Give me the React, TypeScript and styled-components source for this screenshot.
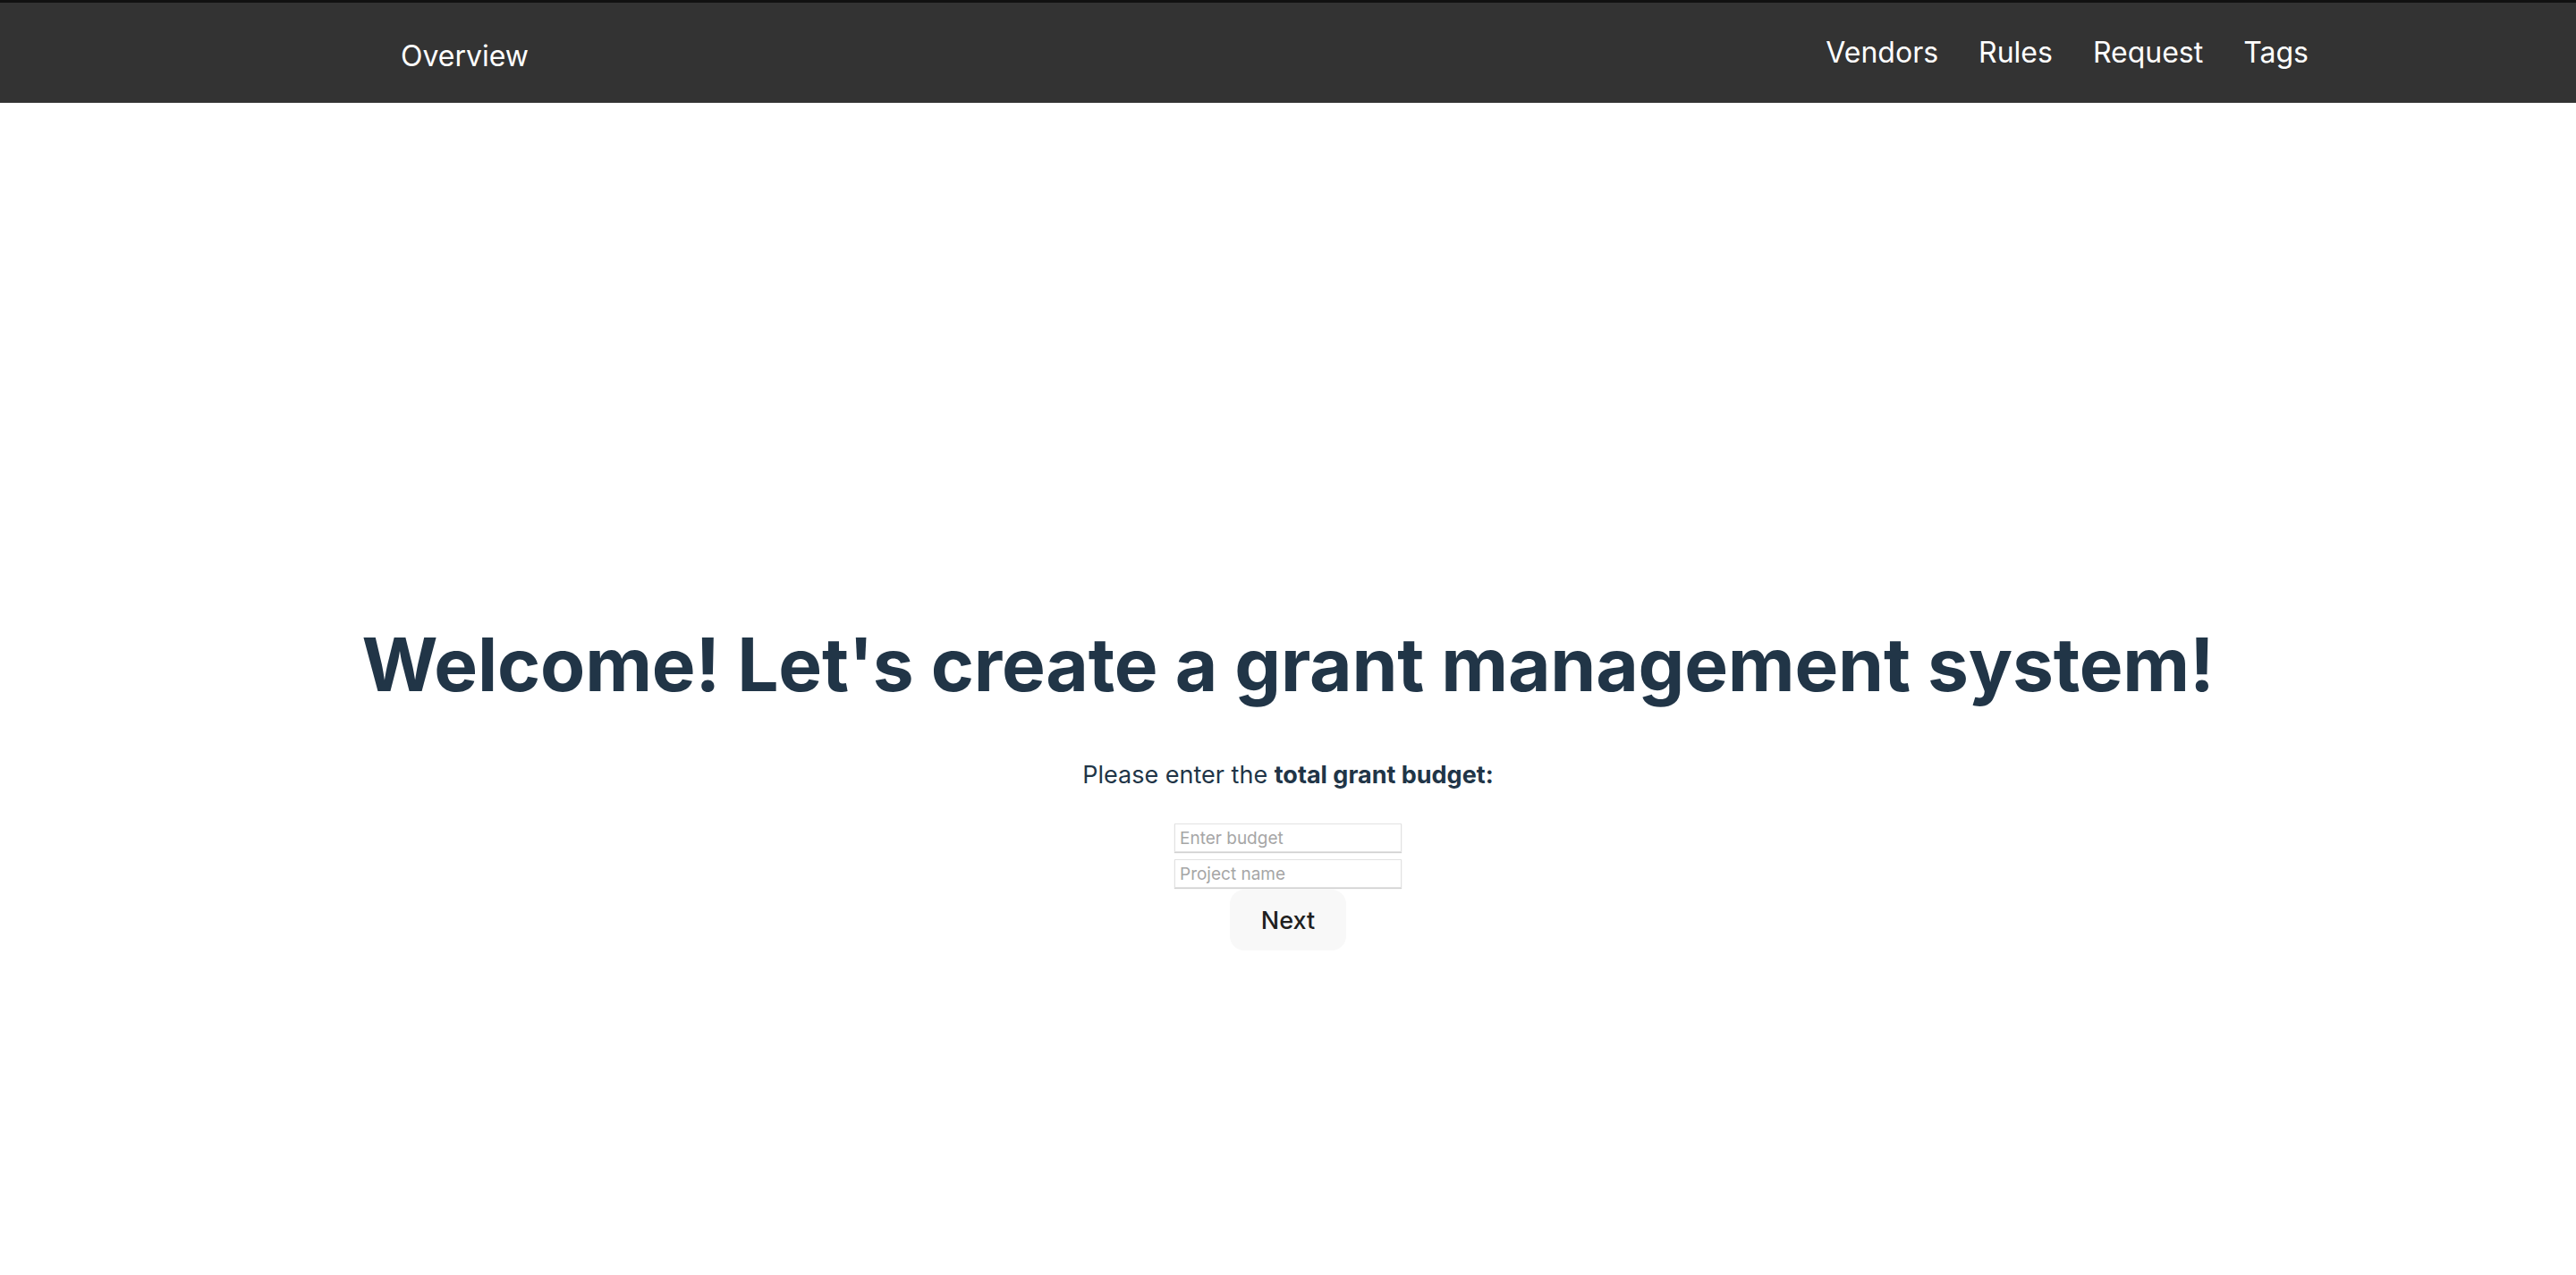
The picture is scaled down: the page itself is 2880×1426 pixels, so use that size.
import React from "react";
import styled, { createGlobalStyle } from "styled-components";

const GlobalStyle = createGlobalStyle`
  html, body {
    margin: 0;
    padding: 0;
    background: #ffffff;
  }
  body {
    font-family: Inter, "Noto Sans", system-ui, sans-serif;
    color: #213547;
    -webkit-font-smoothing: antialiased;
  }
  * { box-sizing: border-box; }
`;

const Page = styled.div`
  min-height: 1426px;
  display: flex;
  flex-direction: column;
`;

const NavBar = styled.nav`
  height: 115px;
  background: #333333;
  border-top: 3px solid #111111;
  display: flex;
  align-items: flex-start;
  justify-content: space-between;
  padding: 36px 299px 0 448px;
`;

const NavLeft = styled.a`
  color: #ffffff;
  font-size: 32px;
  line-height: 40px;
  font-weight: 400;
  text-decoration: none;
  margin-top: 4px;
`;

const NavLinks = styled.div`
  display: flex;
  align-items: center;
  gap: 45px;
`;

const NavLink = styled.a`
  color: #ffffff;
  font-size: 32px;
  line-height: 40px;
  font-weight: 400;
  text-decoration: none;
`;

const Main = styled.main`
  flex: 1;
  display: flex;
  flex-direction: column;
  align-items: center;
  padding-top: 584px;
`;

const Title = styled.h1`
  margin: 0;
  font-size: 82px;
  line-height: 90px;
  font-weight: 700;
  color: #213547;
  letter-spacing: -0.2px;
`;

const Prompt = styled.p`
  margin: 58px 0 0;
  font-size: 27px;
  line-height: 40px;
  color: #213547;

  strong { font-weight: 700; }
`;

const Form = styled.div`
  margin-top: 34px;
  display: flex;
  flex-direction: column;
  align-items: center;
  gap: 8px;
`;

const Field = styled.input`
  width: 254px;
  height: 32px;
  border: 1px solid #e2e2e2;
  box-shadow: 0 1px 1px rgba(0, 0, 0, 0.18);
  padding: 0 5px;
  font-family: Inter, "Noto Sans", sans-serif;
  font-size: 19px;
  color: #213547;
  background: #ffffff;
  outline: none;

  &::placeholder {
    color: #a6a6a6;
  }
`;

const NextButton = styled.button`
  margin-top: -6px;
  width: 130px;
  height: 68px;
  border: 1px solid transparent;
  border-radius: 16px;
  background: #f8f8f8;
  color: #1f1f1f;
  font-family: Inter, "Noto Sans", sans-serif;
  font-size: 27px;
  font-weight: 500;
  cursor: pointer;
`;

export default function App() {
  return (
    <>
      <GlobalStyle />
      <Page>
        <NavBar>
          <NavLeft href="#">Overview</NavLeft>
          <NavLinks>
            <NavLink href="#">Vendors</NavLink>
            <NavLink href="#">Rules</NavLink>
            <NavLink href="#">Request</NavLink>
            <NavLink href="#">Tags</NavLink>
          </NavLinks>
        </NavBar>
        <Main>
          <Title>Welcome! Let's create a grant management system!</Title>
          <Prompt>
            Please enter the <strong>total grant budget:</strong>
          </Prompt>
          <Form>
            <Field placeholder="Enter budget" />
            <Field placeholder="Project name" />
            <NextButton>Next</NextButton>
          </Form>
        </Main>
      </Page>
    </>
  );
}
